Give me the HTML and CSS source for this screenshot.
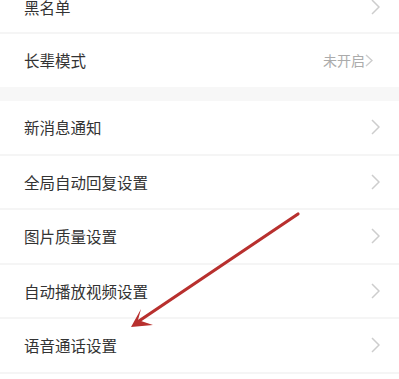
FILE: index.html
```html
<!DOCTYPE html>
<html lang="zh">
<head>
<meta charset="utf-8">
<link rel="stylesheet" href="styles.css">
</head>
<body>
<div class="page">
  <div class="group group-top">
    <div class="row"><span class="label">黑名单</span><span class="right"><svg class="chev" width="9" height="16" viewBox="0 0 9 16"><polyline points="1,1 8,8 1,15" fill="none" stroke="#cdcdcd" stroke-width="1.5"/></svg></span></div>
    <div class="row"><span class="label">长辈模式</span><span class="right"><span class="value">未开启</span><svg class="chev chev-small" width="8" height="13" viewBox="0 0 8 13"><polyline points="1,1 7,6.5 1,12" fill="none" stroke="#cdcdcd" stroke-width="1.4"/></svg></span></div>
  </div>
  <div class="gap"></div>
  <div class="group">
    <div class="row"><span class="label">新消息通知</span><span class="right"><svg class="chev" width="9" height="16" viewBox="0 0 9 16"><polyline points="1,1 8,8 1,15" fill="none" stroke="#cdcdcd" stroke-width="1.5"/></svg></span></div>
    <div class="row"><span class="label">全局自动回复设置</span><span class="right"><svg class="chev" width="9" height="16" viewBox="0 0 9 16"><polyline points="1,1 8,8 1,15" fill="none" stroke="#cdcdcd" stroke-width="1.5"/></svg></span></div>
    <div class="row"><span class="label">图片质量设置</span><span class="right"><svg class="chev" width="9" height="16" viewBox="0 0 9 16"><polyline points="1,1 8,8 1,15" fill="none" stroke="#cdcdcd" stroke-width="1.5"/></svg></span></div>
    <div class="row"><span class="label">自动播放视频设置</span><span class="right"><svg class="chev" width="9" height="16" viewBox="0 0 9 16"><polyline points="1,1 8,8 1,15" fill="none" stroke="#cdcdcd" stroke-width="1.5"/></svg></span></div>
    <div class="row"><span class="label">语音通话设置</span><span class="right"><svg class="chev" width="9" height="16" viewBox="0 0 9 16"><polyline points="1,1 8,8 1,15" fill="none" stroke="#cdcdcd" stroke-width="1.5"/></svg></span></div>
  </div>
  <svg class="arrow" width="399" height="379" viewBox="0 0 399 379">
    <line x1="298" y1="214" x2="136" y2="323" stroke="#b8302e" stroke-width="3.2" stroke-linecap="round"/>
    <path d="M131 327 L141 309 L138 320 L153 325 Z" fill="#b8302e"/>
  </svg>
</div>
</body>
</html>
```
FILE: styles.css
```css
html, body {
  margin: 0;
  padding: 0;
  background: #ffffff;
}
.page {
  position: relative;
  width: 399px;
  height: 379px;
  overflow: hidden;
  font-family: "Noto Sans CJK SC", "Noto Sans", sans-serif;
}
.group-top {
  margin-top: -18px;
}
.row {
  display: flex;
  align-items: center;
  justify-content: space-between;
  height: 52.5px;
  padding: 0 19px 0 24px;
  border-bottom: 2px solid #f5f5f5;
  background: #fff;
}
.group-top .row {
  height: 51.5px;
}
.group-top .row:first-child {
  height: 49.5px;
}
.group-top .row:last-child {
  border-bottom: none;
  height: 53.5px;
}
.label {
  font-size: 15.5px;
  color: #333333;
}
.right {
  display: flex;
  align-items: center;
}
.value {
  font-size: 14px;
  color: #ababab;
}
.chev {
  display: block;
}
.chev-small {
  margin-right: 7px;
}
.gap {
  height: 14px;
  background: #f7f7f7;
}
.arrow {
  position: absolute;
  left: 0;
  top: 0;
}
```
